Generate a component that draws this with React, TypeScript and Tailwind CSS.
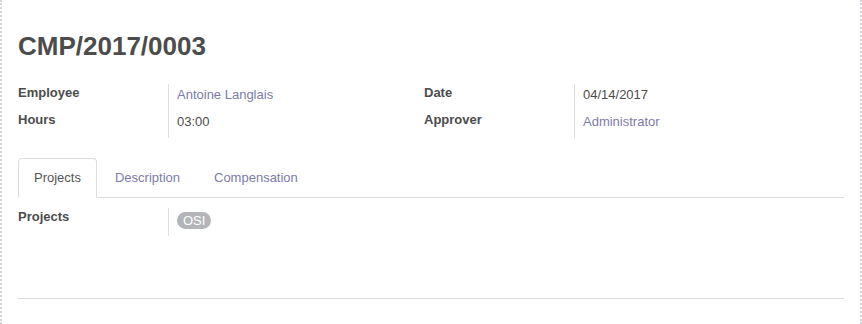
import React from "react";

const Row = ({ label, value, link }: { label: string; value: string; link?: boolean }) => (
  <div className="grid grid-cols-[150px_1fr]">
    <div className="h-[27px] font-bold leading-[18px] text-[#4c4c4c]">{label}</div>
    <div
      className={`h-[27px] border-l border-[#dddddd] pl-2 pt-[2px] leading-[18px] ${
        link ? "text-[#7c7bad]" : "text-[#4c4c4c]"
      }`}
    >
      {value}
    </div>
  </div>
);

export default function App() {
  return (
    <div
      className="w-[862px] h-[324px] overflow-hidden bg-white border-x-2 border-dotted border-[#d4d4da] px-4 pt-[30px] text-[13px] text-[#4c4c4c]"
      style={{ fontFamily: '"Liberation Sans", Arial, sans-serif' }}
    >
      <h1 className="text-[26px] font-bold leading-[32px] text-[#4c4c4c]">CMP/2017/0003</h1>

      <div className="mt-[22px] flex">
        <div className="w-[406px]">
          <Row label="Employee" value="Antoine Langlais" link />
          <Row label="Hours" value="03:00" />
        </div>
        <div className="flex-1">
          <Row label="Date" value="04/14/2017" />
          <Row label="Approver" value="Administrator" link />
        </div>
      </div>

      <div className="mt-[20px] flex border-b border-[#dddddd]">
        <div className="-mb-px mr-[2px] rounded-t-[4px] border border-[#dddddd] border-b-white bg-white px-[15px] pt-[10px] pb-[9px] leading-[18px] text-[#555555]">
          Projects
        </div>
        <div className="mr-[2px] border border-transparent px-[15px] pt-[10px] pb-[9px] leading-[18px] text-[#7c7bad]">
          Description
        </div>
        <div className="mr-[2px] border border-transparent px-[15px] pt-[10px] pb-[9px] leading-[18px] text-[#7c7bad]">
          Compensation
        </div>
      </div>

      <div className="mt-[10px] grid grid-cols-[150px_1fr]">
        <div className="h-[28px] font-bold leading-[18px] text-[#4c4c4c]">Projects</div>
        <div className="h-[28px] border-l border-[#dddddd] pl-2 pt-[3px]">
          <span className="inline-block rounded-full bg-[#b3b5b9] px-[6px] leading-[17px] text-white">OSI</span>
        </div>
      </div>

      <div className="mt-[62px] border-t border-[#dddddd]" />
    </div>
  );
}
